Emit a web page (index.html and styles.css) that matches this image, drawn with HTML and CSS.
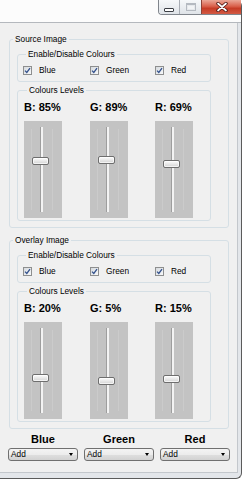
FILE: index.html
```html
<!DOCTYPE html>
<html>
<head>
<meta charset="utf-8">
<title>Colour Mixer</title>
<link rel="stylesheet" href="styles.css">
</head>
<body>
<div class="window">
  <div class="titlebar">
    <div class="caption">
      <span class="cbtn min"><span class="min-glyph"></span></span>
      <span class="cbtn max"><span class="max-glyph"></span></span>
      <span class="cbtn close">
        <svg width="12" height="10" viewBox="0 0 12 10">
          <path d="M2 1.5 L10 8.5 M10 1.5 L2 8.5" stroke="#4a1410" stroke-width="3.4" stroke-linecap="round"/>
          <path d="M2 1.5 L10 8.5 M10 1.5 L2 8.5" stroke="#ffffff" stroke-width="1.7" stroke-linecap="round"/>
        </svg>
      </span>
    </div>
  </div>
  <div class="client">
    <fieldset class="group outer">
      <legend>Source Image</legend>
      <fieldset class="group inner checks">
        <legend>Enable/Disable Colours</legend>
        <div class="check-row">
          <label class="check"><span class="box"><svg width="7" height="7" viewBox="0 0 7 7"><path d="M1 3.6 L2.8 5.4 L6 1.2" fill="none" stroke="#33518c" stroke-width="1.3"/></svg></span>Blue</label>
          <label class="check"><span class="box"><svg width="7" height="7" viewBox="0 0 7 7"><path d="M1 3.6 L2.8 5.4 L6 1.2" fill="none" stroke="#33518c" stroke-width="1.3"/></svg></span>Green</label>
          <label class="check"><span class="box"><svg width="7" height="7" viewBox="0 0 7 7"><path d="M1 3.6 L2.8 5.4 L6 1.2" fill="none" stroke="#33518c" stroke-width="1.3"/></svg></span>Red</label>
        </div>
      </fieldset>
      <fieldset class="group inner levels">
        <legend>Colours Levels</legend>
        <div class="level-grid">
          <div class="level"><div class="level-label">B: 85%</div><div class="track"><span class="thumb" style="top:36px"></span></div></div>
          <div class="level"><div class="level-label">G: 89%</div><div class="track"><span class="thumb" style="top:35px"></span></div></div>
          <div class="level"><div class="level-label">R: 69%</div><div class="track"><span class="thumb" style="top:39px"></span></div></div>
        </div>
      </fieldset>
    </fieldset>

    <fieldset class="group outer second">
      <legend>Overlay Image</legend>
      <fieldset class="group inner checks">
        <legend>Enable/Disable Colours</legend>
        <div class="check-row">
          <label class="check"><span class="box"><svg width="7" height="7" viewBox="0 0 7 7"><path d="M1 3.6 L2.8 5.4 L6 1.2" fill="none" stroke="#33518c" stroke-width="1.3"/></svg></span>Blue</label>
          <label class="check"><span class="box"><svg width="7" height="7" viewBox="0 0 7 7"><path d="M1 3.6 L2.8 5.4 L6 1.2" fill="none" stroke="#33518c" stroke-width="1.3"/></svg></span>Green</label>
          <label class="check"><span class="box"><svg width="7" height="7" viewBox="0 0 7 7"><path d="M1 3.6 L2.8 5.4 L6 1.2" fill="none" stroke="#33518c" stroke-width="1.3"/></svg></span>Red</label>
        </div>
      </fieldset>
      <fieldset class="group inner levels">
        <legend>Colours Levels</legend>
        <div class="level-grid">
          <div class="level"><div class="level-label">B: 20%</div><div class="track"><span class="thumb" style="top:52px"></span></div></div>
          <div class="level"><div class="level-label">G: 5%</div><div class="track"><span class="thumb" style="top:55px"></span></div></div>
          <div class="level"><div class="level-label">R: 15%</div><div class="track"><span class="thumb" style="top:53px"></span></div></div>
        </div>
      </fieldset>
    </fieldset>

    <div class="mix">
      <div class="mix-col"><div class="mix-label">Blue</div><div class="combo"><span>Add</span><span class="arrow"></span></div></div>
      <div class="mix-col"><div class="mix-label">Green</div><div class="combo"><span>Add</span><span class="arrow"></span></div></div>
      <div class="mix-col"><div class="mix-label">Red</div><div class="combo"><span>Add</span><span class="arrow"></span></div></div>
    </div>
  </div>
</div>
</body>
</html>
```
FILE: styles.css
```css
* { box-sizing: border-box; }
html, body { margin: 0; padding: 0; }
body {
  background: #ffffff;
  width: 245px;
  height: 480px;
  overflow: hidden;
  font-family: "Liberation Sans", Arial, sans-serif;
  font-size: 8.3px;
  color: #000;
}
.window {
  width: 242px;
  height: 479px;
  border-right: 1px solid #5b5b5b;
  border-bottom: 1px solid #5b5b5b;
  border-bottom-right-radius: 6px;
  border-top-right-radius: 6px;
  background: #e3e6ea;
  display: flex;
  flex-direction: column;
}
.titlebar {
  height: 23px;
  flex: none;
  background: #fcfcfc;
  border-bottom: 1px solid #b4b8bd;
  display: flex;
  justify-content: flex-end;
  align-items: flex-start;
}
.caption {
  display: flex;
  height: 15px;
  border-left: 1px solid #80858c;
  border-bottom: 1px solid #80858c;
  border-bottom-left-radius: 4px;
  overflow: hidden;
}
.cbtn {
  display: flex;
  align-items: center;
  justify-content: center;
  height: 14px;
}
.min {
  width: 21px;
  background: linear-gradient(#f6f8fa, #dfe3e8);
  border-right: 1px solid #a8adb4;
}
.max {
  width: 22px;
  background: linear-gradient(#f6f8fa, #dfe3e8);
  border-right: 1px solid #8d4236;
}
.close {
  width: 39px;
  background: linear-gradient(#eaa797, #d9604b 45%, #c63c26 60%, #d25a44);
}
.min-glyph {
  width: 10px;
  height: 4px;
  margin-top: 5px;
  border: 1px solid #3b3f45;
  border-radius: 1px;
  background: #fff;
}
.max-glyph {
  width: 10px;
  height: 8px;
  margin-top: -1px;
  border: 1px solid #b5bac1;
  border-top-width: 2px;
  background: #f2f4f6;
  box-shadow: inset 0 0 0 1px #e6e9ec;
}
.client {
  width: 238px;
  height: 450px;
  flex: none;
  background: #f0f0f0;
  border-right: 1px solid #c3c7cc;
  border-bottom: 1px solid #c3c7cc;
  padding: 11px 0 0 8px;
}
.group {
  border: 1px solid #d5dfe5;
  border-radius: 3px;
  margin: 0;
  padding: 0;
  min-width: 0;
}
legend {
  padding: 0 2px;
  margin-left: 3px;
  line-height: 10px;
  font-size: 8.3px;
}
.outer {
  width: 220px;
  margin-left: 1px;
  padding-bottom: 6px;
}
.outer.second { margin-top: 7px; }
.inner {
  width: 194px;
  margin-left: 7px;
}
.checks {
  margin-top: 5px;
  padding: 6px 0 6px 5px;
}
.check-row {
  display: grid;
  grid-template-columns: 67px 65px auto;
  height: 10px;
}
.check {
  display: flex;
  align-items: center;
  gap: 7px;
  line-height: 10px;
}
.box {
  width: 9px;
  height: 9px;
  border: 1px solid #8e8f8f;
  background: linear-gradient(135deg, #d6dade, #f8f9fa);
  display: flex;
  align-items: center;
  justify-content: center;
}
.box svg { display: block; }
.levels {
  margin-top: 3px;
  padding: 6px 0 2px 6px;
}
.level-grid {
  display: grid;
  grid-template-columns: 66px 65px 38px;
}
.level-label {
  font-size: 11px;
  font-weight: bold;
  line-height: 13px;
  white-space: nowrap;
}
.track {
  position: relative;
  width: 38px;
  height: 97px;
  margin-top: 7px;
  background:
    linear-gradient(#f3f3f3, #f3f3f3) 17px 6px / 2px 85px no-repeat,
    linear-gradient(#9e9e9e, #9e9e9e) 16px 6px / 1px 85px no-repeat,
    linear-gradient(#cbcbcb, #cbcbcb) 7px 8px / 1px 81px no-repeat,
    linear-gradient(#cbcbcb, #cbcbcb) 28px 8px / 1px 81px no-repeat,
    #c3c3c3;
}
.thumb {
  position: absolute;
  left: 8px;
  width: 17px;
  height: 8px;
  border: 1px solid #6e6e6e;
  border-radius: 2px;
  background: linear-gradient(#fdfdfd, #e4e4e4 60%, #d4d4d4);
  box-shadow: inset 0 0 0 1px rgba(255,255,255,0.7);
}
.mix {
  display: grid;
  grid-template-columns: repeat(3, 70px);
  column-gap: 6px;
  margin-top: 4px;
}
.mix-col {
  display: flex;
  flex-direction: column;
}
.mix-label {
  font-size: 11px;
  font-weight: bold;
  line-height: 13px;
  text-align: center;
}
.combo {
  margin-top: 2px;
  height: 13px;
  border: 1px solid #707070;
  border-radius: 3px;
  background: linear-gradient(#f4f4f4 0%, #ececec 50%, #dfdfdf 50%, #d2d2d2 100%);
  display: flex;
  align-items: center;
  justify-content: space-between;
  padding: 0 4px 0 2px;
  font-size: 8.3px;
  line-height: 11px;
}
.arrow {
  width: 0;
  height: 0;
  border-left: 2.5px solid transparent;
  border-right: 2.5px solid transparent;
  border-top: 3px solid #000;
}
```
